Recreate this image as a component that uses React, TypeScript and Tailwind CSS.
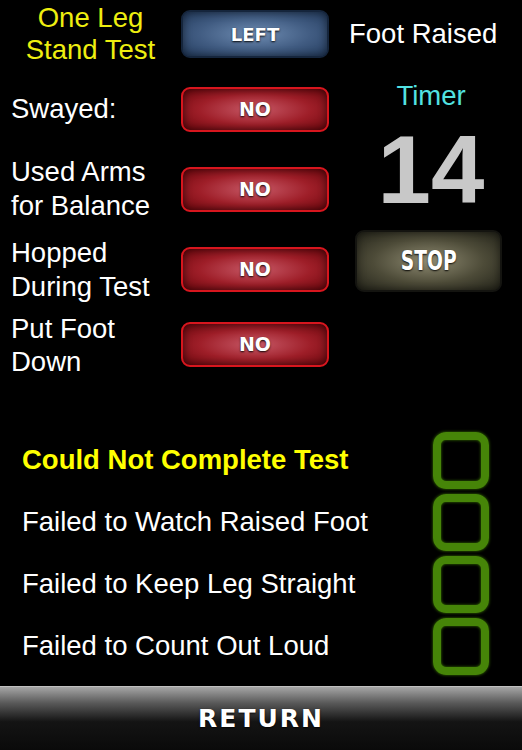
import React from 'react';

const redBtn =
  'flex items-center justify-center w-[148px] h-[45px] rounded-[9px] border-2 border-[#d8161e] bg-[radial-gradient(ellipse_at_center,#c85a68_0%,#9e1e28_55%,#6c060c_100%)] shadow-[inset_0_0_8px_rgba(0,0,0,0.6)]';

const labelText =
  "text-white font-bold font-['DejaVu_Sans',sans-serif] [text-shadow:0_1px_2px_rgba(0,0,0,0.9)]";

function NoButton() {
  return (
    <div className={redBtn}>
      <span className={`${labelText} text-[19px]`}>NO</span>
    </div>
  );
}

function Check() {
  return (
    <div className="w-[56px] h-[57px] rounded-[13px] border-[8px] border-[#468508] shadow-[0_0_3px_#3c7a00,inset_0_0_3px_#3c7a00]" />
  );
}

export default function App() {
  const failures = [
    { text: 'Could Not Complete Test', strong: true },
    { text: 'Failed to Watch Raised Foot', strong: false },
    { text: 'Failed to Keep Leg Straight', strong: false },
    { text: 'Failed to Count Out Loud', strong: false },
  ];

  return (
    <div className="w-[522px] h-[750px] bg-black flex flex-col overflow-hidden font-['Liberation_Sans',Arial,sans-serif] text-white text-[27.5px]">
      <div className="flex pt-[2px]">
        {/* left side: tests + buttons */}
        <div className="w-[340px] flex flex-col">
          <div className="flex items-center h-[64px]">
            <div className="w-[181px] text-center text-[#eeee10] leading-[32px]">
              One Leg
              <br />
              Stand Test
            </div>
            <div className="flex items-center justify-center w-[148px] h-[48px] rounded-[9px] border-2 border-[#15253c] bg-[radial-gradient(ellipse_at_center,#6e8cb2_0%,#415c82_55%,#243c5e_100%)] shadow-[inset_0_0_8px_rgba(0,0,0,0.5)]">
              <span className={`${labelText} text-[18px]`}>LEFT</span>
            </div>
          </div>
          <div className="flex items-center h-[86px]">
            <div className="w-[181px] pl-[11px]">Swayed:</div>
            <NoButton />
          </div>
          <div className="flex items-center h-[74px]">
            <div className="w-[181px] pl-[11px] leading-[34px]">
              Used Arms
              <br />
              for Balance
            </div>
            <NoButton />
          </div>
          <div className="flex items-center h-[87px]">
            <div className="w-[181px] pl-[11px] leading-[34px]">
              Hopped
              <br />
              During Test
            </div>
            <NoButton />
          </div>
          <div className="flex items-center h-[63px]">
            <div className="w-[181px] pl-[11px] leading-[33px]">
              Put Foot
              <br />
              Down
            </div>
            <NoButton />
          </div>
        </div>

        {/* right side: timer */}
        <div className="flex-1 flex flex-col">
          <div className="h-[64px] flex items-center pl-[9px]">Foot Raised</div>
          <div className="mt-[14px] leading-[32px] text-center text-[#52e2e2]">Timer</div>
          <div className="mt-[8px] h-[100px] leading-[100px] text-center text-[96px] font-bold text-[#c8c8c8]">
            14
          </div>
          <div className="mt-[10px] ml-[15px] w-[147px] h-[62px] flex items-center justify-center rounded-[9px] border-2 border-[#141410] bg-[radial-gradient(ellipse_at_center,#8f8b72_0%,#4d4b38_55%,#24241a_100%)] shadow-[inset_0_0_8px_rgba(0,0,0,0.5)]">
            <span className={`${labelText} text-[26px] inline-block scale-x-[0.72]`}>STOP</span>
          </div>
        </div>
      </div>

      <div className="mt-[53px] flex flex-col">
        {failures.map((f) => (
          <div key={f.text} className="flex items-center justify-between h-[62px] pl-[22px] pr-[33px]">
            <span className={f.strong ? 'font-bold text-[#ffff00]' : 'text-white'}>{f.text}</span>
            <Check />
          </div>
        ))}
      </div>

      <div className="mt-[9px] h-[64px] flex items-center justify-center border-t border-[#c0c0c0] bg-[linear-gradient(to_bottom,#a6a6a6_0%,#5a5a5a_25%,#141414_55%,#0a0a0a_100%)]">
        <span className="font-['DejaVu_Sans',sans-serif] font-bold text-[25px] tracking-[2px] text-white [text-shadow:0_1px_2px_rgba(0,0,0,0.9)]">
          RETURN
        </span>
      </div>
    </div>
  );
}
